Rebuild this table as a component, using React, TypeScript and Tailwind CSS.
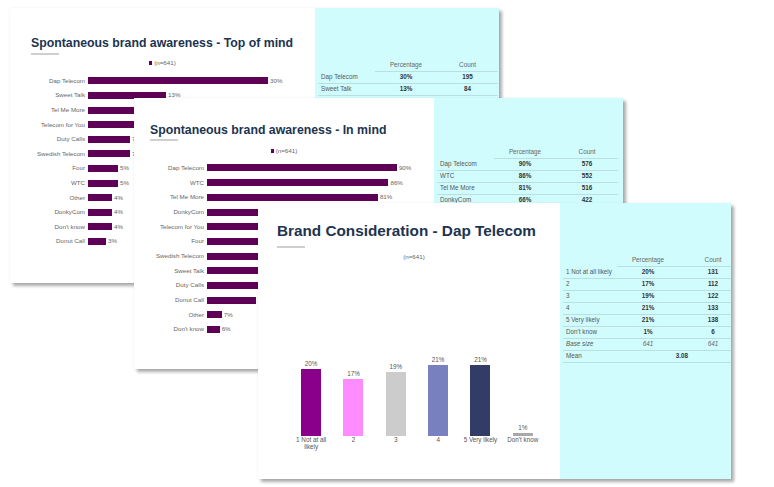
import React from "react";

type Bar = { label: string; value: number };

const topOfMind: Bar[] = [
  { label: "Dap Telecom", value: 30 },
  { label: "Sweet Talk", value: 13 },
  { label: "Tel Me More", value: 11 },
  { label: "Telecom for You", value: 9 },
  { label: "Duty Calls", value: 7 },
  { label: "Swedish Telecom", value: 7 },
  { label: "Four", value: 5 },
  { label: "WTC", value: 5 },
  { label: "Other", value: 4 },
  { label: "DonkyCom", value: 4 },
  { label: "Don't know", value: 4 },
  { label: "Donut Call", value: 3 },
];

const inMind: Bar[] = [
  { label: "Dap Telecom", value: 90 },
  { label: "WTC", value: 86 },
  { label: "Tel Me More", value: 81 },
  { label: "DonkyCom", value: 66 },
  { label: "Telecom for You", value: 60 },
  { label: "Four", value: 55 },
  { label: "Swedish Telecom", value: 50 },
  { label: "Sweet Talk", value: 45 },
  { label: "Duty Calls", value: 40 },
  { label: "Donut Call", value: 23 },
  { label: "Other", value: 7 },
  { label: "Don't know", value: 6 },
];

const consideration = [
  { label: "1 Not at all likely", value: 20, count: 131, color: "bg-[#8b008b]" },
  { label: "2", value: 17, count: 112, color: "bg-[#ff8cff]" },
  { label: "3", value: 19, count: 122, color: "bg-[#cccccc]" },
  { label: "4", value: 21, count: 133, color: "bg-[#7880bf]" },
  { label: "5 Very likely", value: 21, count: 138, color: "bg-[#333c66]" },
  { label: "Don't know", value: 1, count: 6, color: "bg-[#a8a8a8]" },
];

const cardShadow =
  "shadow-[0_0_2px_rgba(0,0,0,0.08),3px_3px_3px_rgba(0,0,0,0.32)]";

function Title({ text, className }: { text: string; className: string }) {
  return (
    <h2 className={`font-bold text-[#1c3450] whitespace-nowrap ${className}`}>
      {text}
    </h2>
  );
}

function Legend({ square }: { square: boolean }) {
  return (
    <div className="flex items-center justify-center gap-[2px] h-[8px] text-[6.2px] leading-none text-[#666]">
      {square && <span className="w-[3px] h-[4px] bg-[#5d0056]" />}
      <span>(n=641)</span>
    </div>
  );
}

function HBars({
  rows,
  scale,
  labelClass,
  rowClass,
}: {
  rows: Bar[];
  scale: number;
  labelClass: string;
  rowClass: string;
}) {
  return (
    <div className="flex flex-col">
      {rows.map((r) => (
        <div key={r.label} className={`flex items-center ${rowClass}`}>
          <span
            className={`text-right text-[6.2px] leading-none text-[#666] whitespace-nowrap ${labelClass}`}
          >
            {r.label}
          </span>
          <div
            className="ml-[3px] h-[7px] bg-[#5d0056]"
            style={{ width: r.value * scale }}
          />
          <span className="ml-[2px] text-[6.2px] leading-none text-[#666]">
            {r.value}%
          </span>
        </div>
      ))}
    </div>
  );
}

type Row = { label: string; pct: string; count: string; italic?: boolean };

function DataTable({ rows, grid, mean }: { rows: Row[]; grid: string; mean?: string }) {
  const cell = "h-[12px] flex items-center border-b border-[#b9dfe1]";
  return (
    <div className={`grid ${grid} text-[6.3px] leading-none`}>
      <div className="h-[12px]" />
      <div className={`${cell} justify-center text-[#666]`}>Percentage</div>
      <div className={`${cell} justify-center text-[#666]`}>Count</div>
      {rows.map((r) => (
        <React.Fragment key={r.label}>
          <div className={`${cell} pl-[3px] text-[#555] whitespace-nowrap ${r.italic ? "italic" : ""}`}>
            {r.label}
          </div>
          <div
            className={`${cell} justify-center ${r.italic ? "italic text-[#666]" : "font-bold text-[#333]"}`}
          >
            {r.pct}
          </div>
          <div
            className={`${cell} justify-center ${r.italic ? "italic text-[#666]" : "font-bold text-[#333]"}`}
          >
            {r.count}
          </div>
        </React.Fragment>
      ))}
      {mean && (
        <>
          <div className={`${cell} pl-[3px] text-[#555]`}>Mean</div>
          <div className={`${cell} col-span-2 justify-center font-bold text-[#333]`}>{mean}</div>
        </>
      )}
    </div>
  );
}

export default function App() {
  return (
    <div className="relative w-[774px] h-[487px] bg-white overflow-hidden font-['Liberation_Sans',Arial,sans-serif]">
      {/* slide 1 */}
      <div className={`absolute left-[10px] top-[8px] w-[489px] h-[275px] flex bg-white ${cardShadow}`}>
        <div className="w-[305px] flex flex-col">
          <div className="pl-[21px] pt-[29px]">
            <Title text="Spontaneous brand awareness - Top of mind" className="text-[12.3px] leading-[12px]" />
            <div className="mt-[4px] h-[2px] w-[28px] bg-[#cfcfcf]" />
          </div>
          <div className="mt-[4px]">
            <Legend square />
          </div>
          <div className="mt-[6.7px]">
            <HBars rows={topOfMind} scale={6} labelClass="w-[75px]" rowClass="h-[14.6px]" />
          </div>
        </div>
        <div className="flex-1 bg-[#d1fcfd] pt-[52px] pl-[3px] overflow-hidden">
          <DataTable
            grid="grid-cols-[57px_62px_61px]"
            rows={[
              { label: "Dap Telecom", pct: "30%", count: "195" },
              { label: "Sweet Talk", pct: "13%", count: "84" },
              { label: "Tel Me More", pct: "11%", count: "70" },
            ]}
          />
        </div>
      </div>

      {/* slide 2 */}
      <div className={`absolute left-[134px] top-[98px] w-[489px] h-[271px] flex bg-white ${cardShadow}`}>
        <div className="w-[300px] flex flex-col">
          <div className="pl-[16px] pt-[26px]">
            <Title text="Spontaneous brand awareness - In mind" className="text-[12.3px] leading-[12px]" />
            <div className="mt-[3px] h-[2px] w-[28px] bg-[#cfcfcf]" />
          </div>
          <div className="mt-[6px]">
            <Legend square />
          </div>
          <div className="mt-[5.6px]">
            <HBars rows={inMind} scale={2.11} labelClass="w-[70px]" rowClass="h-[14.7px]" />
          </div>
        </div>
        <div className="flex-1 bg-[#d1fcfd] pt-[49px] pl-[3px] overflow-hidden">
          <DataTable
            grid="grid-cols-[57px_62px_62px]"
            rows={[
              { label: "Dap Telecom", pct: "90%", count: "576" },
              { label: "WTC", pct: "86%", count: "552" },
              { label: "Tel Me More", pct: "81%", count: "516" },
              { label: "DonkyCom", pct: "66%", count: "422" },
              { label: "Telecom for You", pct: "60%", count: "385" },
            ]}
          />
        </div>
      </div>

      {/* slide 3 */}
      <div className={`absolute left-[258px] top-[203px] w-[473px] h-[276px] flex bg-white ${cardShadow}`}>
        <div className="w-[302px] flex flex-col">
          <div className="pl-[19px] pt-[20px]">
            <Title text="Brand Consideration - Dap Telecom" className="text-[15.3px] leading-[16px]" />
            <div className="mt-[7px] h-[2px] w-[28px] bg-[#cfcfcf]" />
          </div>
          <div className="mt-[5px] pl-[10px]">
            <Legend square={false} />
          </div>
          <div className="ml-[32px] w-[254px] h-[175px] flex items-end">
            {consideration.map((c) => (
              <div key={c.label} className="flex-1 flex flex-col items-center">
                <span className="text-[6.3px] leading-[8px] text-[#555]">{c.value}%</span>
                <div className={`mt-[1px] w-[20px] ${c.color}`} style={{ height: c.value * 3.37 }} />
              </div>
            ))}
          </div>
          <div className="ml-[32px] w-[254px] flex">
            {consideration.map((c) => (
              <div key={c.label} className="flex-1 min-w-0 flex justify-center">
                <span className="w-[40px] text-center text-[6.3px] leading-[7px] text-[#555]">
                  {c.label}
                </span>
              </div>
            ))}
          </div>
        </div>
        <div className="flex-1 bg-[#d1fcfd] pt-[52px] pl-[3px] overflow-hidden">
          <DataTable
            grid="grid-cols-[54px_62px_68px]"
            rows={[
              ...consideration.map((c) => ({
                label: c.label,
                pct: `${c.value}%`,
                count: String(c.count),
              })),
              { label: "Base size", pct: "641", count: "641", italic: true },
            ]}
            mean="3.08"
          />
        </div>
      </div>
    </div>
  );
}
